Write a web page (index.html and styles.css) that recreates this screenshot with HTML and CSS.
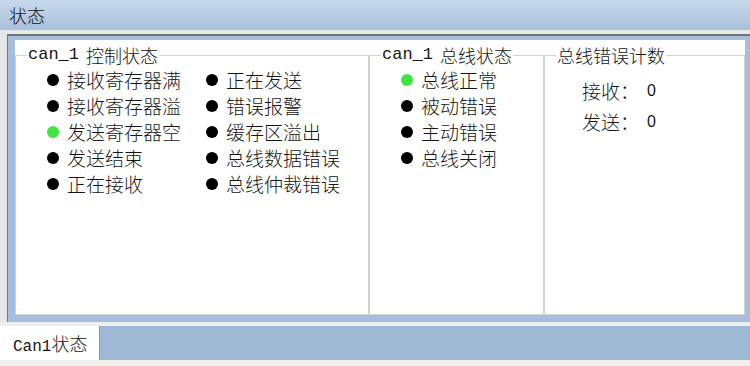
FILE: index.html
```html
<!DOCTYPE html>
<html lang="zh-CN">

<head>
    <meta charset="UTF-8">
    <title>状态</title>
    <link rel="stylesheet" href="styles.css">
</head>

<body>
    <div class="titlebar">状态</div>

    <div class="frame">
        <div class="frame-inner">
            <div class="panel">
                <fieldset class="group">
                    <legend><span class="mono">can_1</span> 控制状态</legend>
                    <div class="states">
                        <div class="item"><i class="dot"></i>接收寄存器满</div>
                        <div class="item"><i class="dot"></i>正在发送</div>
                        <div class="item"><i class="dot"></i>接收寄存器溢</div>
                        <div class="item"><i class="dot"></i>错误报警</div>
                        <div class="item"><i class="dot on"></i>发送寄存器空</div>
                        <div class="item"><i class="dot"></i>缓存区溢出</div>
                        <div class="item"><i class="dot"></i>发送结束</div>
                        <div class="item"><i class="dot"></i>总线数据错误</div>
                        <div class="item"><i class="dot"></i>正在接收</div>
                        <div class="item"><i class="dot"></i>总线仲裁错误</div>
                    </div>
                </fieldset>

                <fieldset class="group">
                    <legend><span class="mono">can_1</span> 总线状态</legend>
                    <div class="states single">
                        <div class="item"><i class="dot on"></i>总线正常</div>
                        <div class="item"><i class="dot"></i>被动错误</div>
                        <div class="item"><i class="dot"></i>主动错误</div>
                        <div class="item"><i class="dot"></i>总线关闭</div>
                    </div>
                </fieldset>

                <fieldset class="group">
                    <legend>总线错误计数</legend>
                    <div class="counts">
                        <span class="label">接收：</span>
                        <span class="num">0</span>
                        <span class="label">发送：</span>
                        <span class="num">0</span>
                    </div>
                </fieldset>
            </div>
        </div>
    </div>

    <div class="tabs">
        <div class="tab"><span class="mono">Can1</span>状态</div>
    </div>
</body>

</html>
```

FILE: styles.css
```css
* {
    padding: 0;
    margin: 0;
    box-sizing: border-box;
}

html,
body {
    width: 750px;
    height: 366px;
    overflow: hidden;
}

body {
    background-color: #f1efea;
    font-family: "Noto Sans CJK SC", sans-serif;
    font-weight: 300;
    color: #151515;
}

.mono {
    font-family: "Liberation Mono", monospace;
    font-weight: normal;
    font-size: 17px;
}

.titlebar {
    height: 30px;
    padding-left: 9px;
    font-size: 18px;
    line-height: 30px;
    color: #111;
    background: linear-gradient(#c8d8eb, #a9c1dc);
}

.frame {
    padding: 4px 0 0 7px;
    background-color: #e6e7e9;
}

.frame-inner {
    border-top: 2px solid #707274;
    border-left: 1px solid #7a7a7a;
    padding: 4px 5px 7px 7px;
    background-color: #a6bedb;
}

.panel {
    display: grid;
    grid-template-columns: 354px 175px 1fr;
    height: 275px;
    background-color: #fff;
}

.group {
    min-width: 0;
    margin-top: 7px;
    border: 1px solid #d3d3d3;
}

.group legend {
    display: flex;
    align-items: center;
    height: 16px;
    margin-left: 11px;
    padding: 0 1px;
    font-size: 18px;
    line-height: 16px;
    white-space: pre;
}

.group legend .mono {
    margin-right: 3px;
}

.states {
    display: grid;
    grid-template-columns: 159px auto;
    margin-top: 4px;
    padding-left: 31px;
}

.states.single {
    grid-template-columns: auto;
}

.item {
    display: flex;
    align-items: center;
    gap: 8px;
    height: 26px;
    font-size: 19px;
    line-height: 26px;
}

.dot {
    width: 12px;
    height: 12px;
    border-radius: 50%;
    background-color: #000;
}

.dot.on {
    background-color: #3fe43f;
}

.counts {
    display: grid;
    grid-template-columns: 65px auto;
    grid-auto-rows: 31px;
    align-items: center;
    padding: 12px 0 0 37px;
    font-size: 19px;
}

.num {
    font-family: "Liberation Sans", sans-serif;
    font-weight: normal;
    font-size: 16px;
}

.tabs {
    height: 38px;
    border-top: 4px solid #eceef0;
    background-color: #9fb8d4;
}

.tab {
    width: 100px;
    height: 34px;
    padding-left: 13px;
    border-right: 1px solid #8d98a6;
    font-size: 18px;
    line-height: 34px;
    background-color: #fff;
}

.tab .mono {
    font-size: 16px;
}
```
